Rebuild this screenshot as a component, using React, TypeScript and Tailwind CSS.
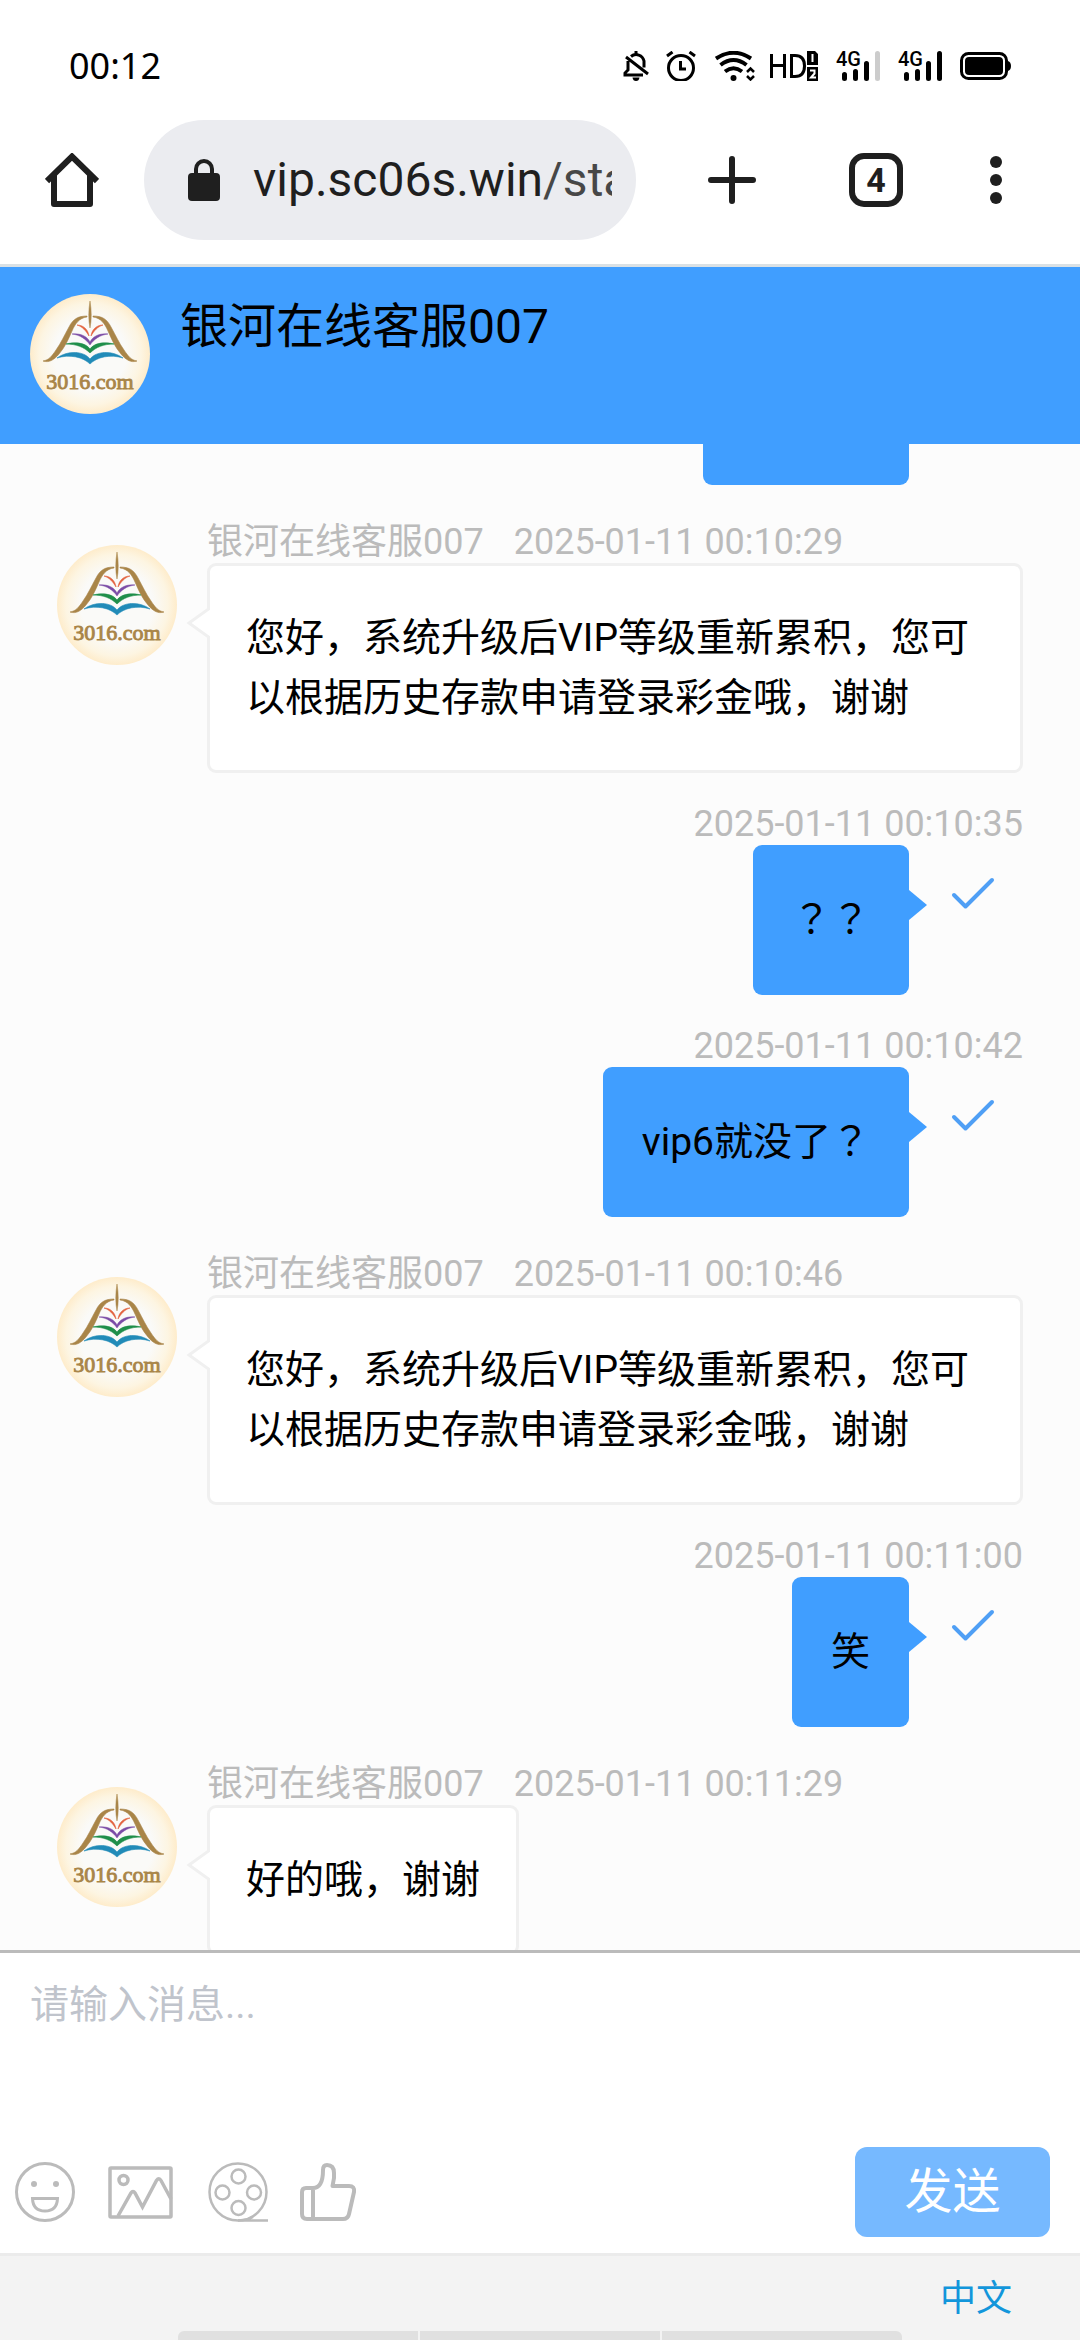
import type { ReactNode } from "react";

type Message = {
  from: "agent" | "me";
  time: string;
  text: string;
};

const AGENT = "银河在线客服007";

const messages: Message[] = [
  {
    from: "agent",
    time: "2025-01-11 00:10:29",
    text: "您好，系统升级后VIP等级重新累积，您可以根据历史存款申请登录彩金哦，谢谢",
  },
  { from: "me", time: "2025-01-11 00:10:35", text: "？？" },
  { from: "me", time: "2025-01-11 00:10:42", text: "vip6就没了？" },
  {
    from: "agent",
    time: "2025-01-11 00:10:46",
    text: "您好，系统升级后VIP等级重新累积，您可以根据历史存款申请登录彩金哦，谢谢",
  },
  { from: "me", time: "2025-01-11 00:11:00", text: "笑" },
  { from: "agent", time: "2025-01-11 00:11:29", text: "好的哦，谢谢" },
];

function Avatar() {
  return (
    <svg viewBox="0 0 120 120" className="size-[120px] shrink-0">
      <defs>
        <radialGradient id="cream">
          <stop offset="0.6" stopColor="#fafaf8" />
          <stop offset="0.85" stopColor="#fdf5e2" />
          <stop offset="1" stopColor="#feeccb" />
        </radialGradient>
      </defs>
      <circle cx="60" cy="60" r="60" fill="url(#cream)" />
      <path d="M60 7Q62.500 22 60 34Q57.500 22 60 7Z" fill="#a98548" stroke="#a98548" strokeWidth="0.5" />
      <g fill="#a98548">
        <path
          id="arch"
          d="M57 22C48 22 43 25 39 33C34 42 31 49 26 56C22 62 19 66 13 67C19 69 24 66 29 60C35 53 38 46 42 37C45 30 49 24 57 23Z"
          stroke="#a98548"
          strokeWidth="0.6"
        />
        <use href="#arch" transform="matrix(-1 0 0 1 120 0)" />
      </g>
      <g fill="#e2603c">
        <path id="page1" d="M47 31C53 31 58 35 59 42C56 37 53 33 47 31Z" stroke="#e2603c" strokeWidth="0.6" />
        <use href="#page1" transform="matrix(-1 0 0 1 120 0)" />
      </g>
      <path d="M42 40C50 39 57 42 60 48C63 42 70 39 78 40C70 41 64 45 60 51C56 45 50 41 42 40Z" fill="#7b4ca6" stroke="#7b4ca6" strokeWidth="0.5" />
      <path d="M36 50C44 48 55 48 60 55C65 48 76 48 84 50C74 50 66 53 60 59C54 53 46 50 36 50Z" fill="#1f8f4a" stroke="#1f8f4a" strokeWidth="0.6" />
      <path d="M27 64C38 56 54 57 60 65C66 57 82 56 93 64C80 60 67 63 60 70C53 63 40 60 27 64Z" fill="#218bb8" stroke="#218bb8" strokeWidth="0.6" />
      <text
        x="60"
        y="95"
        textAnchor="middle"
        fill="#a98548"
        stroke="#a98548"
        strokeWidth="0.9"
        className="font-['Liberation_Serif'] text-[22px]"
      >
        3016.com
      </text>
    </svg>
  );
}

function Signal({ weak }: { weak?: boolean }) {
  return (
    <svg viewBox="0 0 44 30" className="h-[30px] w-11 overflow-visible">
      <text x="0" y="15" className="font-['Roboto'] text-[20px] font-medium">
        4G
      </text>
      <g strokeWidth="5" strokeLinecap="round" stroke="#000">
        <path d="M8.500 23.500V27.500M19.500 20.500V27.500M30.500 12.500V27.500" />
        <path d="M41.500 2.500V27.500" stroke={weak ? "#ccc" : "#000"} />
      </g>
    </svg>
  );
}

function StatusBar() {
  return (
    <div className="flex h-[120px] items-start justify-between pt-[51px] pr-[69px] pl-[69px]">
      <span className="font-['Noto_Sans'] text-[36px] leading-[30px] text-black">00:12</span>
      <div className="flex items-center">
        <svg viewBox="0 0 26 30" className="mr-[17px] h-[30px] w-[26px]" fill="none" stroke="#000" strokeWidth="3">
          <path d="M5 10V19L2 22V24H20M8 5.500A8 8 0 0 1 21 10V16.500M13 0V3M3 6L25 23" />
          <path d="M9.500 26.500H16.500Q16 30 13 30T9.500 26.500Z" fill="#000" stroke="none" />
        </svg>
        <svg viewBox="0 0 30 30" className="mr-[19px] h-[30px] w-[30px]" fill="none" stroke="#000" strokeWidth="3">
          <circle cx="15" cy="17" r="12.500" />
          <path d="M14.500 10V18H20M1 5L6.500 1M29 5L23.500 1" />
        </svg>
        <svg viewBox="0 0 40 30" className="mr-[15px] h-[30px] w-10" fill="none" stroke="#000" strokeWidth="4">
          <path d="M1 7.500Q18.500 -4 36 7.500M5.500 14Q18.500 4 31.500 14M10 20.500Q18.500 14 27 20.500" />
          <circle cx="18.500" cy="27" r="3" fill="#000" stroke="none" />
          <path d="M32 21L35.500 17.500L39 21M32 25L35.500 28.500L39 25" strokeWidth="2.500" />
        </svg>
        <svg viewBox="0 0 49 30" className="mr-[17px] h-[30px] w-[49px]">
          <g fill="none" stroke="#000" strokeWidth="3">
            <path d="M1.500 3V27M14.500 3V27M1.500 14.500H14.500" />
            <path d="M21.500 4.500V25.500H25Q34.500 25.500 34.500 15T25 4.500Z" />
          </g>
          <path d="M37 0H45L48 3V14H37ZM37 16H48V30H37Z" />
          <path d="M42.500 3V11M40 19.500H44.500V22.500L41 26.500H46" fill="none" stroke="#fff" strokeWidth="2" />
        </svg>
        <div className="mr-[18px]">
          <Signal weak />
        </div>
        <div className="mr-[18px]">
          <Signal />
        </div>
        <svg viewBox="0 0 51 30" className="h-[30px] w-[51px]">
          <rect x="1.500" y="2.500" width="45" height="25" rx="7" fill="none" stroke="#000" strokeWidth="3" />
          <rect x="5" y="6" width="38" height="18" rx="4" />
          <path d="M48 10Q51 11 51 15T48 20Z" />
        </svg>
      </div>
    </div>
  );
}

function BrowserBar() {
  return (
    <div className="flex h-[147px] items-start border-b-[3px] border-[#dae1e5] pr-[78px] pl-[45px] text-[#1f1f1f]">
      <button aria-label="主页" className="mt-[33px] mr-[45px]">
        <svg viewBox="0 0 54 54" className="size-[54px]" fill="none" stroke="currentColor" strokeWidth="6" strokeLinejoin="round">
          <path d="M2 28L27 3.500L52 28" strokeLinejoin="miter" />
          <path d="M9 22V51H45V22" />
        </svg>
      </button>
      <div className="flex h-[120px] min-w-0 flex-1 items-center rounded-full bg-[#ebecf0] pr-6 pl-11">
        <svg viewBox="0 0 32 42" className="mr-[33px] h-[42px] w-8 shrink-0">
          <rect y="14" width="32" height="28" rx="4" fill="currentColor" />
          <path d="M8 16V10A8 8 0 0 1 24 10V16" fill="none" stroke="currentColor" strokeWidth="4" />
        </svg>
        <span className="min-w-0 flex-1 overflow-hidden text-[48px] leading-[60px] whitespace-nowrap">
          vip.sc06s.win<span className="text-[#474747]">/sta</span>
        </span>
      </div>
      <button aria-label="新标签页" className="mt-9 ml-[72px]">
        <svg viewBox="0 0 48 48" className="size-12" stroke="currentColor" strokeWidth="6" strokeLinecap="round">
          <path d="M24 3V45M3 24H45" />
        </svg>
      </button>
      <button
        aria-label="标签页"
        className="mt-[33px] ml-[93px] flex size-[54px] items-center justify-center rounded-[15px] border-[6px] border-[#1f1f1f] font-['Roboto'] text-[34px] leading-none font-bold"
      >
        4
      </button>
      <button aria-label="菜单" className="mt-9 ml-[87px]">
        <svg viewBox="0 0 12 48" className="h-12 w-3" fill="currentColor">
          <circle cx="6" cy="6" r="6" />
          <circle cx="6" cy="24" r="6" />
          <circle cx="6" cy="42" r="6" />
        </svg>
      </button>
    </div>
  );
}

function AgentMessage({ time, text }: Message) {
  return (
    <li className="flex items-start pt-9 pr-[57px] pl-[57px]">
      <div className="mt-6 mr-[30px]">
        <Avatar />
      </div>
      <div className="min-w-0">
        <p className="flex gap-[30px] text-[36px] leading-[42px] text-[#bbb]">
          <span>{AGENT}</span>
          <time>{time}</time>
        </p>
        <div className="relative w-fit rounded-[9px] border-[3px] border-[#f0f0f0] bg-white px-9 py-[42px] text-[39px] leading-[60px]">
          <svg viewBox="0 0 24 34" className="absolute top-10 -left-6 h-[34px] w-6">
            <path d="M24 2L3 17L24 32" fill="#fff" stroke="#f0f0f0" strokeWidth="3" />
          </svg>
          {text}
        </div>
      </div>
    </li>
  );
}

function MyMessage({ time, text }: Message) {
  return (
    <li className="flex flex-col items-end pt-[30px] pr-[57px]">
      <time className="text-[36px] leading-[42px] text-[#bbb]">{time}</time>
      <div className="flex items-start">
        <div className="relative rounded-[9px] bg-[#409eff] px-[39px] py-[45px] text-[39px] leading-[60px]">
          {/* the JP face centres the full-width question mark */}
          {text.split(/(？+)/).map((part, i) =>
            part.startsWith("？") ? (
              <span key={i} lang="ja" className="font-['Roboto','Noto_Sans_CJK_JP',sans-serif]">
                {part}
              </span>
            ) : (
              part
            )
          )}
          <svg viewBox="0 0 18 30" className="absolute top-[45px] -right-[18px] h-[30px] w-[18px]">
            <path d="M0 0L18 15L0 30Z" fill="#409eff" />
          </svg>
        </div>
        <svg viewBox="0 0 44 34" className="mt-8 mr-7 ml-[42px] h-[34px] w-11" fill="none" stroke="#4f9ff5" strokeWidth="4" strokeLinecap="round" strokeLinejoin="round">
          <path d="M3 18L14.500 29.500L41 3" />
        </svg>
      </div>
    </li>
  );
}

function ToolButton({ label, children }: { label: string; children: ReactNode }) {
  return (
    <button type="button" aria-label={label} className="text-[#bbb]">
      {children}
    </button>
  );
}

function Composer() {
  return (
    <form className="border-t-[3px] border-[#bbb] bg-white">
      <textarea
        aria-label="消息"
        placeholder="请输入消息..."
        className="block h-[194px] w-full resize-none px-[30px] pt-[22px] text-[39px] leading-[60px] outline-none placeholder:text-[#c0c4cc]"
      />
      <div className="flex items-center pr-[30px] pb-4 pl-[15px]">
        <div className="flex flex-1 items-center">
          <ToolButton label="表情">
            <svg viewBox="0 0 60 60" className="mr-[33px] size-[60px]" fill="none" stroke="currentColor" strokeWidth="3">
              <circle cx="30" cy="30" r="28.500" />
              <path d="M17.500 36.500H42.500Q42 49 30 49T17.500 36.500Z" />
              <circle cx="19" cy="22" r="3" fill="currentColor" stroke="none" />
              <circle cx="41" cy="22" r="3" fill="currentColor" stroke="none" />
            </svg>
          </ToolButton>
          <ToolButton label="图片">
            <svg viewBox="0 0 65 53" className="mr-[35px] h-[53px] w-[65px]" fill="none" stroke="currentColor" strokeWidth="3.500" strokeLinejoin="round">
              <rect x="2" y="2" width="61" height="49" rx="1" />
              <circle cx="15.500" cy="14" r="4.500" />
              <path d="M10 50L23 27Q25 24 27 27L34.500 41L48.500 14.500Q51 11 53 14.500L63 33" strokeLinejoin="miter" />
            </svg>
          </ToolButton>
          <ToolButton label="视频">
            <svg viewBox="0 0 61 60" className="mr-[31px] h-[60px] w-[61px]" fill="none" stroke="currentColor" strokeWidth="2.500">
              <circle cx="30" cy="30" r="28.500" />
              <circle cx="30.500" cy="14.500" r="7" />
              <circle cx="14.500" cy="30.500" r="7" />
              <circle cx="46" cy="30.500" r="7" />
              <circle cx="30.500" cy="46" r="7" />
              <path d="M30 58.500H60M30 58.500Q39 58.500 45 55" />
            </svg>
          </ToolButton>
          <ToolButton label="点赞">
            <svg viewBox="0 0 57 58" className="h-[58px] w-[57px]" fill="none" stroke="currentColor" strokeWidth="4" strokeLinejoin="round">
              <path d="M13 25H6Q2 25 2 29V51Q2 56 7 56H43Q48 56 49 51L54 29Q55 23 49 23H32.500L34 15V10Q34 2 27 2Q23 2 23 7Q23 25 13 25V56" />
            </svg>
          </ToolButton>
        </div>
        <button type="submit" className="h-[90px] w-[195px] rounded-xl bg-[#76b9ff] text-[48px] leading-[60px] text-white">
          发送
        </button>
      </div>
    </form>
  );
}

export default function App() {
  return (
    <div className="flex h-screen flex-col overflow-hidden bg-white font-['Roboto','Noto_Sans_CJK_SC',sans-serif] text-black">
      <StatusBar />
      <BrowserBar />
      <header className="flex items-start bg-[#409eff] px-[30px] pt-[27px] pb-[30px]">
        <Avatar />
        <h1 className="ml-[30px] text-[48px] leading-[66px]">{AGENT}</h1>
      </header>

      <main className="min-h-0 flex-1 overflow-hidden bg-[#fcfcfc]">
        {/* tail of the message scrolled under the header */}
        <div className="mr-[171px] ml-auto h-[41px] w-[206px] rounded-b-[9px] bg-[#409eff]" />
        <ul>
          {messages.map((m) =>
            m.from === "agent" ? <AgentMessage key={m.time} {...m} /> : <MyMessage key={m.time} {...m} />
          )}
        </ul>
      </main>

      <Composer />

      <footer className="border-t-[3px] border-[#ebebeb] bg-[#f3f3f3]">
        <button type="button" className="mt-[19px] mr-[68px] mb-2 ml-auto block text-[36px] leading-[48px] text-[#1296db]">
          中文
        </button>
        <div className="mx-auto flex h-[9px] w-[67%] gap-[2px] overflow-hidden rounded-t-md">
          <div className="flex-1 bg-[#e0e0e0]" />
          <div className="flex-1 bg-[#e0e0e0]" />
          <div className="flex-1 bg-[#e0e0e0]" />
        </div>
      </footer>
    </div>
  );
}
